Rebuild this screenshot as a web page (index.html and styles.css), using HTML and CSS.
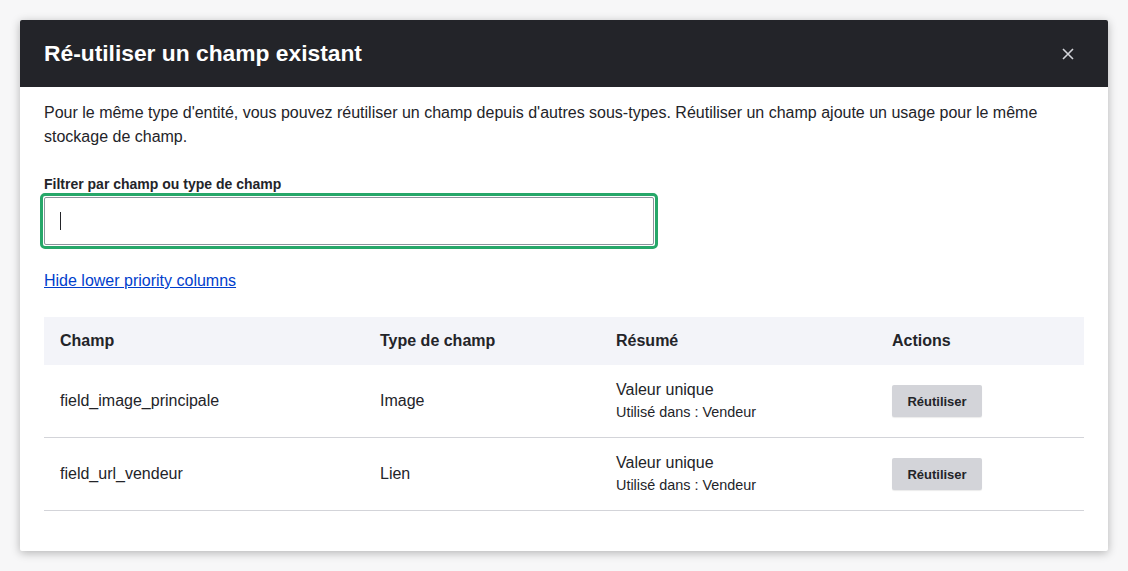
FILE: index.html
```html
<!DOCTYPE html>
<html lang="fr">
<head>
<meta charset="utf-8">
<title>Ré-utiliser un champ existant</title>
<link rel="stylesheet" href="styles.css">
</head>
<body>
<div class="dialog">
  <div class="dialog-header">
    <h1 class="dialog-title">Ré-utiliser un champ existant</h1>
    <button class="close" aria-label="Fermer">
      <svg width="12" height="12" viewBox="0 0 12 12"><path d="M1 1 L11 11 M11 1 L1 11" stroke="#d3d4d9" stroke-width="1.6" fill="none"/></svg>
    </button>
  </div>
  <div class="dialog-body">
    <p class="intro">Pour le même type d'entité, vous pouvez réutiliser un champ depuis d'autres sous-types. Réutiliser un champ ajoute un usage pour le même stockage de champ.</p>
    <label class="label" for="filter">Filtrer par champ ou type de champ</label>
    <div class="focus-ring"><div class="input"><span class="caret"></span></div></div>
    <a class="toggle" href="#">Hide lower priority columns</a>
    <table class="table">
      <colgroup><col class="c1"><col class="c2"><col class="c3"><col class="c4"></colgroup>
      <thead>
        <tr><th>Champ</th><th>Type de champ</th><th>Résumé</th><th>Actions</th></tr>
      </thead>
      <tbody>
        <tr>
          <td>field_image_principale</td>
          <td>Image</td>
          <td><div class="sum">Valeur unique</div><div class="used">Utilisé dans : Vendeur</div></td>
          <td><button class="btn">Réutiliser</button></td>
        </tr>
        <tr>
          <td>field_url_vendeur</td>
          <td>Lien</td>
          <td><div class="sum">Valeur unique</div><div class="used">Utilisé dans : Vendeur</div></td>
          <td><button class="btn">Réutiliser</button></td>
        </tr>
      </tbody>
    </table>
  </div>
</div>
</body>
</html>
```
FILE: styles.css
```css
html, body {
  margin: 0;
  padding: 0;
}
body {
  background: #f7f7f8;
  font-family: "Liberation Sans", Arial, sans-serif;
  color: #232429;
  width: 1128px;
  height: 571px;
  padding: 20px;
  box-sizing: border-box;
}
.dialog {
  width: 1088px;
  height: 531px;
  background: #fff;
  border-radius: 2px;
  box-shadow: 0 2px 10px rgba(0,0,0,0.28);
  overflow: hidden;
}
.dialog-header {
  background: #232429;
  height: 67px;
  display: flex;
  align-items: center;
  justify-content: space-between;
  padding: 0 24px 0 24px;
  box-sizing: border-box;
}
.dialog-title {
  margin: 0;
  color: #fff;
  font-size: 22.8px;
  font-weight: bold;
  line-height: 28px;
  padding-bottom: 1px;
}
.close {
  background: none;
  border: 0;
  padding: 0;
  width: 24px;
  height: 24px;
  display: flex;
  align-items: center;
  justify-content: center;
  margin-right: 4px;
  margin-top: 0;
}
.dialog-body {
  padding: 14px 24px 0;
}
.intro {
  margin: 0;
  font-size: 16px;
  line-height: 24px;
  color: #232429;
}
.label {
  display: block;
  margin-top: 26px;
  font-size: 14px;
  font-weight: bold;
  line-height: 18px;
}
.focus-ring {
  margin: 0 0 0 -4px;
  width: 618px;
  height: 56px;
  box-sizing: border-box;
  border: 3px solid #26a769;
  border-radius: 5px;
  padding: 1px;
}
.input {
  height: 48px;
  box-sizing: border-box;
  border: 1px solid #8e929c;
  border-radius: 2px;
  display: flex;
  align-items: center;
  padding-left: 15px;
}
.caret {
  width: 1px;
  height: 18px;
  background: #232429;
}
.toggle {
  display: inline-block;
  margin-top: 22px;
  font-size: 16px;
  line-height: 20px;
  color: #003ecc;
  text-decoration: underline;
}
.table {
  margin-top: 26px;
  width: 1040px;
  border-collapse: collapse;
  table-layout: fixed;
}
.c1 { width: 320px; }
.c2 { width: 236px; }
.c3 { width: 276px; }
.c4 { width: 208px; }
.table th {
  background: #f3f4f9;
  height: 48px;
  text-align: left;
  font-size: 16px;
  font-weight: bold;
  padding: 0 16px;
  color: #232429;
}
.table td {
  height: 72px;
  padding: 0 16px;
  font-size: 16px;
  border-bottom: 1px solid #d3d4d9;
  color: #232429;
  vertical-align: middle;
}
.sum {
  font-size: 16px;
  line-height: 22px;
}
.used {
  font-size: 14.4px;
  line-height: 22px;
}
.btn {
  background: #d3d4d9;
  border: 0;
  border-radius: 2px;
  font-family: "Liberation Sans", Arial, sans-serif;
  font-weight: bold;
  font-size: 13px;
  color: #232429;
  width: 90px;
  height: 32px;
  padding: 0;
  box-shadow: 0 1px 1px rgba(0,0,0,0.08);
}
```
